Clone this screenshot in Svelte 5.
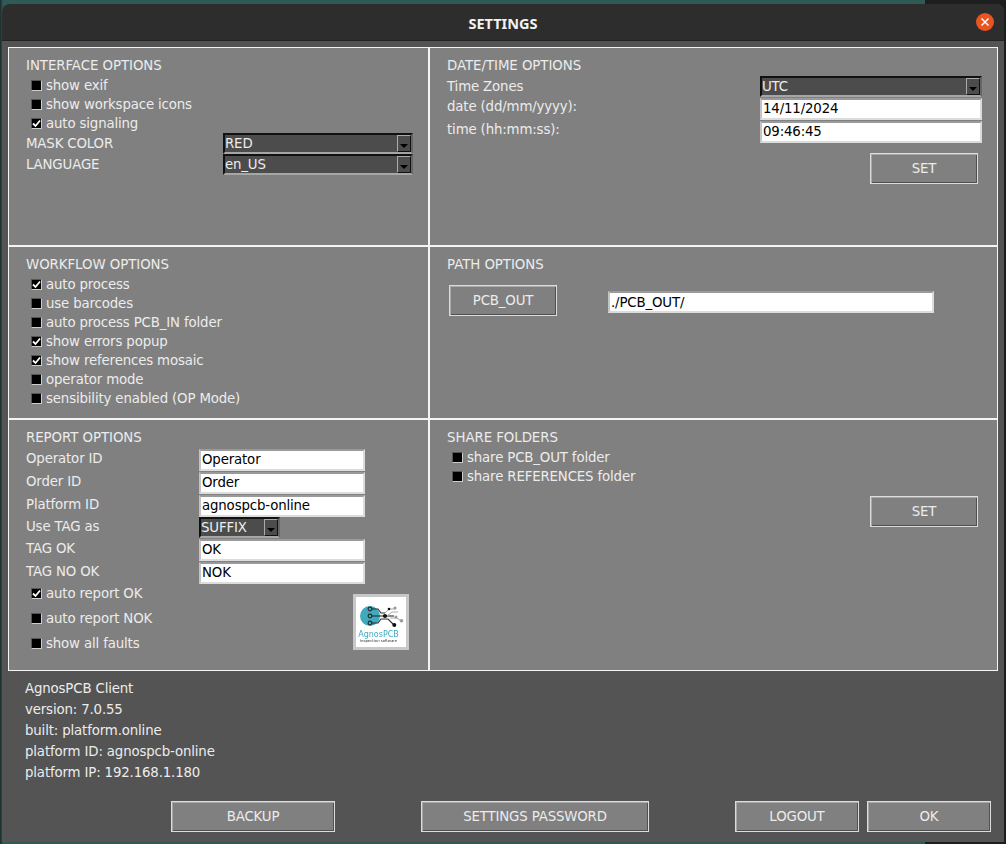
<script>
  const interfaceChecks = [
    { label: "show exif", on: false },
    { label: "show workspace icons", on: false },
    { label: "auto signaling", on: true },
  ]
  const workflowChecks = [
    { label: "auto process", on: true },
    { label: "use barcodes", on: false },
    { label: "auto process PCB_IN folder", on: false },
    { label: "show errors popup", on: true },
    { label: "show references mosaic", on: true },
    { label: "operator mode", on: false },
    { label: "sensibility enabled (OP Mode)", on: false },
  ]
  const about = [
    "AgnosPCB Client",
    "version: 7.0.55",
    "built: platform.online",
    "platform ID: agnospcb-online",
    "platform IP: 192.168.1.180",
  ]
</script>

{#snippet check(label, on)}
  <div class="check">
    <span class="box">
      {#if on}
        <svg viewBox="0 0 9 9" width="9" height="9"><path d="M1 4.5 L3.5 7 L8 1.5" fill="none" stroke="#fff" stroke-width="1.8" /></svg>
      {/if}
    </span>
    <span>{label}</span>
  </div>
{/snippet}

{#snippet combo(value, cls)}
  <div class="combo {cls}">
    <span class="combo-value">{value}</span>
    <span class="combo-arrow"><i></i></span>
  </div>
{/snippet}

<div class="window">
  <header class="titlebar">
    <span class="title">SETTINGS</span>
    <button class="close" aria-label="close">
      <svg viewBox="0 0 18 18" width="18" height="18"><path d="M5.5 5.5 L12.5 12.5 M12.5 5.5 L5.5 12.5" stroke="#fff" stroke-width="1.5" /></svg>
    </button>
  </header>

  <div class="panels">
    <section class="panel">
      <h2>INTERFACE OPTIONS</h2>
      <div class="checks">
        {#each interfaceChecks as c}
          {@render check(c.label, c.on)}
        {/each}
      </div>
      <div class="form form-interface">
        <span>MASK COLOR</span>
        {@render combo("RED", "")}
        <span>LANGUAGE</span>
        {@render combo("en_US", "")}
      </div>
    </section>

    <section class="panel">
      <h2>DATE/TIME OPTIONS</h2>
      <div class="form form-date">
        <span>Time Zones</span>
        {@render combo("UTC", "")}
        <span class="label-top">date (dd/mm/yyyy):</span>
        <input value="14/11/2024" />
        <span class="label-top">time (hh:mm:ss):</span>
        <input value="09:46:45" />
      </div>
      <div class="set-row"><button class="btn set">SET</button></div>
    </section>

    <section class="panel">
      <h2>WORKFLOW OPTIONS</h2>
      <div class="checks">
        {#each workflowChecks as c}
          {@render check(c.label, c.on)}
        {/each}
      </div>
    </section>

    <section class="panel">
      <h2>PATH OPTIONS</h2>
      <div class="path-row">
        <button class="btn pcb">PCB_OUT</button>
        <input class="path" value="./PCB_OUT/" />
      </div>
    </section>

    <section class="panel">
      <h2>REPORT OPTIONS</h2>
      <div class="form form-report">
        <span>Operator ID</span>
        <input value="Operator" />
        <span>Order ID</span>
        <input value="Order" />
        <span>Platform ID</span>
        <input value="agnospcb-online" />
        <span>Use TAG as</span>
        {@render combo("SUFFIX", "combo-small")}
        <span>TAG OK</span>
        <input value="OK" />
        <span>TAG NO OK</span>
        <input value="NOK" />
      </div>
      <div class="report-bottom">
        <div class="checks checks-wide">
          {@render check("auto report OK", true)}
          {@render check("auto report NOK", false)}
          {@render check("show all faults", false)}
        </div>
        <div class="logo">
          <svg viewBox="0 0 50 50" width="50" height="50">
            <rect width="50" height="50" fill="#fff" />
            <circle cx="14" cy="19" r="10" fill="#3fa9bd" />
            <g fill="none" stroke="#2c2c2c" stroke-width="1.1">
              <path d="M15 12 H22 L25 16 H29" />
              <path d="M15 19 H38" />
              <path d="M15 26 H22 L25 22 H32 L38 28" />
              <circle cx="14" cy="12" r="1.9" />
              <circle cx="14" cy="19" r="1.9" />
              <circle cx="14" cy="26" r="1.9" />
            </g>
            <g fill="none" stroke="#aaa" stroke-width="1">
              <path d="M29 16 L33 12 H39" />
              <path d="M31 19 L36 15 H42" />
              <path d="M34 21 H41 L45 24" />
            </g>
            <g fill="#111">
              <circle cx="29" cy="19" r="2.1" />
              <circle cx="38.3" cy="28" r="2" />
              <circle cx="33" cy="12" r="1.3" />
            </g>
            <g fill="#999">
              <circle cx="39" cy="11" r="1.6" />
              <circle cx="45.5" cy="23.7" r="1.8" />
              <circle cx="40" cy="20" r="1.5" />
            </g>
            <text x="22.5" y="40" text-anchor="middle" class="logo-name">AgnosPCB</text>
            <text x="22.5" y="45" text-anchor="middle" class="logo-sub">Inspection software</text>
          </svg>
        </div>
      </div>
    </section>

    <section class="panel">
      <h2>SHARE FOLDERS</h2>
      <div class="checks">
        {@render check("share PCB_OUT folder", false)}
        {@render check("share REFERENCES folder", false)}
      </div>
      <div class="set-row"><button class="btn set">SET</button></div>
    </section>
  </div>

  <div class="about">
    {#each about as line}
      <div>{line}</div>
    {/each}
  </div>

  <footer class="actions">
    <button class="btn backup">BACKUP</button>
    <button class="btn password">SETTINGS PASSWORD</button>
    <button class="btn logout">LOGOUT</button>
    <button class="btn ok">OK</button>
  </footer>
</div>

<style>
  :global(body) {
    margin: 0;
    background: linear-gradient(to right, #1c2a2c 0, #2f5a55 3px, #2f5a55 925px, #1e1e1e 925px);
  }

  .window {
    box-sizing: border-box;
    width: 1002px;
    height: 838px;
    margin: 4px 0 0 2px;
    display: flex;
    flex-direction: column;
    background: #545454;
    border-radius: 8px 8px 0 0;
    overflow: hidden;
    font-family: "DejaVu Sans", sans-serif;
    font-size: 13.33px;
    letter-spacing: -0.15px;
    color: #ececec;
  }

  .titlebar {
    flex: none;
    height: 37px;
    display: flex;
    align-items: center;
    justify-content: center;
    position: relative;
    background: #2d2d2d;
    border-bottom: 1px solid #222;
    box-sizing: border-box;
  }

  .title {
    font-family: "Noto Sans", sans-serif;
    font-weight: 700;
    font-size: 14.5px;
    letter-spacing: 0;
    color: #f2f2f2;
    margin-top: 2px;
  }

  .close {
    position: absolute;
    right: 10px;
    top: 9px;
    width: 18px;
    height: 18px;
    padding: 0;
    border: none;
    border-radius: 50%;
    background: #e95420;
    display: flex;
  }

  .panels {
    flex: none;
    width: 990px;
    margin: 6px 0 0 6px;
    box-sizing: border-box;
    padding: 1px;
    display: grid;
    grid-template-columns: 419px 1fr;
    grid-template-rows: 197px 171px 250px;
    gap: 2px;
    background: #f4f4f4;
  }

  .panel {
    background: #808080;
    padding: 9px 17px 0;
    min-width: 0;
  }

  h2 {
    margin: 0;
    font-size: 13.33px;
    font-weight: 400;
    line-height: 17px;
    letter-spacing: -0.05px;
    color: #ececec;
  }

  .checks {
    display: flex;
    flex-direction: column;
    margin: 2px 0 0 5px;
  }

  .check {
    display: flex;
    align-items: center;
    gap: 4px;
    height: 19px;
  }

  .box {
    flex: none;
    box-sizing: border-box;
    width: 11px;
    height: 11px;
    background: #000;
    border: 1px solid;
    border-color: #555 #ccc #ccc #555;
    display: flex;
  }

  .form {
    display: grid;
    align-items: center;
  }

  .form-interface {
    grid-template-columns: 197px 190px;
    grid-auto-rows: 21px;
  }

  .form-date {
    grid-template-columns: 313px 222px;
    grid-template-rows: 21px 23px 23px;
    margin-top: 2px;
  }

  .form-report {
    grid-template-columns: 173px 166px;
    grid-template-rows: 23px 23px 23px 21px 23px 23px;
    margin-top: 2px;
  }

  .form-report > span {
    margin-bottom: 2px;
  }

  .label-top {
    align-self: start;
    padding-top: 2px;
  }

  input {
    box-sizing: border-box;
    width: 100%;
    height: 22px;
    padding: 0 1px;
    margin: 0;
    font: inherit;
    letter-spacing: inherit;
    color: #000;
    background: #fff;
    border: 2px solid;
    border-color: #9a9a9a #dcdcdc #dcdcdc #c4c4c4;
    border-radius: 0;
    outline: none;
  }

  .combo {
    box-sizing: border-box;
    height: 21px;
    display: flex;
    align-items: center;
    justify-content: space-between;
    background: #4c4c4c;
    border: 2px solid;
    border-color: #111 #666 #a6a6a6 #111;
    color: #ececec;
  }

  .combo-arrow {
    box-sizing: border-box;
    width: 14px;
    height: 17px;
    background: #4c4c4c;
    border: 1px solid;
    border-color: #aaa #111 #111 #aaa;
    display: flex;
    align-items: flex-end;
    justify-content: center;
  }

  .combo-arrow i {
    width: 0;
    height: 0;
    margin-bottom: 3px;
    border: 4px solid transparent;
    border-top-color: #000;
    border-bottom: none;
  }

  .combo-small {
    width: 81px;
  }

  .btn {
    box-sizing: border-box;
    height: 31px;
    padding: 0;
    font: inherit;
    letter-spacing: inherit;
    color: #ececec;
    background: #808080;
    border: 1px solid #dcdcdc;
    box-shadow: inset 1px 1px 0 #a8a8a8, inset -1px -1px 0 #505050;
    border-radius: 0;
  }

  .set {
    width: 108px;
  }

  .set-row {
    display: flex;
    justify-content: flex-end;
    margin-top: 10px;
    padding-right: 2px;
  }

  .path-row {
    display: flex;
    align-items: center;
    margin: 12px 0 0 2px;
  }

  .pcb {
    width: 108px;
  }

  .path {
    width: 326px;
    margin: 3px 0 0 51px;
  }

  .report-bottom {
    display: flex;
    justify-content: space-between;
  }

  .checks-wide {
    margin-top: -3px;
  }

  .checks-wide .check {
    height: 25px;
  }

  .logo {
    box-sizing: border-box;
    width: 56px;
    height: 56px;
    margin: 10px 2px 0 0;
    border: 3px solid #c8c8c8;
    background: #fff;
    overflow: hidden;
    display: flex;
  }

  .logo svg {
    flex: none;
    filter: blur(0.35px);
  }

  .logo-name {
    font-family: "DejaVu Sans", sans-serif;
    font-size: 8px;
    letter-spacing: 0;
    fill: #3fa9bd;
  }

  .logo-sub {
    font-family: "DejaVu Sans", sans-serif;
    font-size: 3.8px;
    letter-spacing: 0;
    fill: #333;
  }

  .about {
    flex: none;
    margin: 7px 0 0 23px;
    line-height: 21px;
  }

  .actions {
    flex: none;
    display: flex;
    margin: 18px 0 0 169px;
  }

  .backup {
    width: 164px;
  }

  .password {
    width: 228px;
    margin-left: 86px;
  }

  .logout {
    width: 124px;
    margin-left: 86px;
  }

  .ok {
    width: 124px;
    margin-left: 8px;
  }
</style>
